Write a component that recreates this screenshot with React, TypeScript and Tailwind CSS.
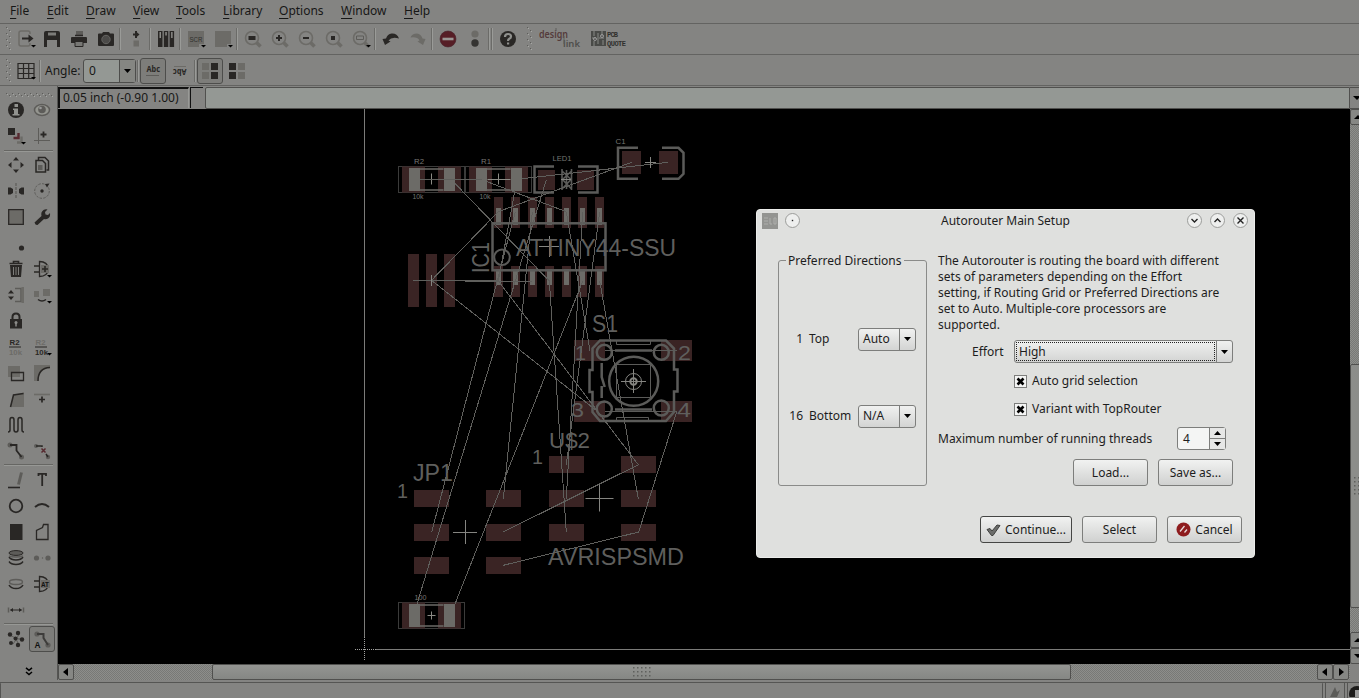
import React from "react";

const D = "#292725";
const M = "#5d5c59";
const L = "#6c6b67";

function Ico({ children, className = "" }: { children?: React.ReactNode; className?: string }) {
  return (
    <svg width="24" height="24" viewBox="0 0 24 24" fill="none" stroke={D} strokeWidth="1.5" className={`shrink-0 ${className}`}>
      {children}
    </svg>
  );
}

const Caret = () => <path d="M17 18h5l-2.500 2.500z" fill="#000" stroke="none" />;

function Cell({ children }: { children?: React.ReactNode }) {
  return <div className="flex h-full w-[27px] shrink-0 items-center justify-center">{children}</div>;
}

function Sep() {
  return <div className="mr-px h-[22px] w-[2px] shrink-0 border-r border-[#9a9b98] bg-[#6b6b68]" />;
}

function Grip() {
  return (
    <svg width="6" height="24" viewBox="0 0 6 24" className="shrink-0">
      {[0, 1, 2, 3, 4, 5, 6, 7].map((i) => (
        <g key={i}>
          <rect x={i % 2 ? 3 : 0} y={i * 3} width="1" height="1" fill="#5d5d5a" />
          <rect x={(i % 2 ? 3 : 0) + 1} y={i * 3 + 1} width="1" height="1" fill="#a6a7a4" />
        </g>
      ))}
    </svg>
  );
}

function Mag({ children }: { children?: React.ReactNode }) {
  return (
    <Ico>
      <path d="M15.500 15.500l4 4" stroke={L} strokeWidth="3.500" />
      <circle cx="11" cy="11" r="6.500" stroke={L} strokeWidth="1.600" />
      {children}
    </Ico>
  );
}

const menus = [
  ["File", "w-[37px]"],
  ["Edit", "w-[39px]"],
  ["Draw", "w-[47px]"],
  ["View", "w-[43px]"],
  ["Tools", "w-[47px]"],
  ["Library", "w-[56px]"],
  ["Options", "w-[62px]"],
  ["Window", "w-[63px]"],
  ["Help", "w-[40px]"],
];

function MenuBar() {
  return (
    <div className="flex h-6 shrink-0 items-center border-b border-[#636361] pb-px pl-[10px]">
      {menus.map(([m, w]) => (
        <div key={m} className={`${w} whitespace-nowrap`}>
          <span className="underline decoration-1 underline-offset-[3px]">{m[0]}</span>
          {m.slice(1)}
        </div>
      ))}
    </div>
  );
}

function MainToolbar() {
  return (
    <div className="flex h-[31px] shrink-0 items-center border-b border-[#636361]">
      <div className="flex w-[12px] shrink-0 pl-[6px]"><Grip /></div>
      <Cell>
        <Ico><path d="M16 7V6q0-2-2-2H7Q5 4 5 6v11q0 2 2 2h7q2 0 2-2v-1" stroke={L} /><path d="M8 11.500h8" strokeWidth="2" /><path d="M14.500 7.500l5 4-5 4z" fill={D} stroke="none" /><Caret /></Ico>
      </Cell>
      <div className="-ml-px flex h-full"><Cell>
        <Ico><path d="M4 6q0-2 2-2h12q2 0 2 2v14H4z" fill={D} stroke="none" /><path d="M8 5.500h8v3H8z" fill="#7c7c79" stroke="none" /><path d="M7 13h10v7H7z" fill="#848482" stroke="none" /></Ico>
      </Cell></div>
      <Cell>
        <Ico><path d="M9 4h7v4H9z" fill={M} stroke="none" /><path d="M8 8.500h8" stroke={D} /><path d="M4 11q0-1 1-1h14q1 0 1 1v5H4z" fill={D} stroke="none" /><path d="M8 14.500h8v5H8z" fill="#777774" stroke={D} strokeWidth="1" /></Ico>
      </Cell>
      <Cell>
        <Ico><path d="M4 7.500q0-1 1-1h3l1-1.500h6l1 1.500h3q1 0 1 1V18q0 1-1 1H5q-1 0-1-1z" fill={D} stroke="none" /><circle cx="12" cy="12.500" r="4.200" fill="#4b4a48" stroke="#656461" strokeWidth="1" /></Ico>
      </Cell>
      <Sep />
      <Cell>
        <Ico><path d="M9 7.500h4M12 4v7" strokeWidth="2" /><path d="M12 4.500l3.500 3-3.500 3z" fill={D} stroke="none" /><path d="M9.500 13.500h5.500v6H9.500z" fill={L} stroke="none" /></Ico>
      </Cell>
      <Sep />
      <Cell>
        <Ico><path d="M4 4h4.500v16H4zM9.800 4h4.500v16H9.800zM15.600 4h4.500v16h-4.500z" fill={D} stroke="none" /><path d="M5.500 5h1.500v6H5.500zM11.300 5h1.500v3.500h-1.500zM17.100 5h1.500v6h-1.500z" fill="#8b8b88" stroke="none" /></Ico>
      </Cell>
      <Sep />
      <Cell>
        <Ico><path d="M4 4h16v16H4z" fill={L} stroke="none" /><text x="5.500" y="14.500" fontSize="7.500" fontFamily="Liberation Sans, sans-serif" fill="#30302e" stroke="none" textLength="13" lengthAdjust="spacingAndGlyphs">SCR</text><path d="M15 17h7v4h-7z" fill="#848482" stroke="none" /><Caret /></Ico>
      </Cell>
      <Cell>
        <Ico><path d="M4 4h16v16H4z" fill={L} stroke="none" /><path d="M16 17h6v4h-6z" fill="#848482" stroke="none" /><Caret /></Ico>
      </Cell>
      <Sep />
      <Cell><Mag><path d="M7.500 9h7v4h-7z" fill={D} stroke="none" /></Mag></Cell>
      <Cell><Mag><path d="M8 11h6M11 8v6" strokeWidth="2" /></Mag></Cell>
      <Cell><Mag><path d="M8 11h6" strokeWidth="2" /></Mag></Cell>
      <Cell><Mag><path d="M9 9h4v4H9z" fill={D} stroke="none" /></Mag></Cell>
      <Cell><Mag><path d="M7.500 9h7v3.500h-7z" stroke={M} strokeWidth="1" /><Caret /></Mag></Cell>
      <Sep />
      <Cell>
        <Ico><path d="M3.500 12l2.500 6 5.500-3.500-2-1q3-4 10.500-2Q18 6 12.500 6.500 8.500 7 7 11.500z" fill={D} stroke="none" /></Ico>
      </Cell>
      <Cell>
        <Ico><path d="M19.500 12L17 18l-5.500-3.500 2-1q-2-4-9-3Q6 6.500 11 6.500q4 .5 5.500 5z" fill={L} stroke="none" /></Ico>
      </Cell>
      <Sep />
      <Cell>
        <Ico><circle cx="12" cy="12" r="8" fill="#561e26" stroke="#46222a" strokeWidth=".6" /><path d="M6.500 12h11" stroke="#9a9694" strokeWidth="2.600" /></Ico>
      </Cell>
      <Cell>
        <Ico><circle cx="12" cy="7" r="3.600" fill={L} stroke="none" /><circle cx="12" cy="16" r="3.700" fill="#353432" stroke="none" /></Ico>
      </Cell>
      <Sep />
      <Sep />
      <Cell>
        <Ico><circle cx="12" cy="12" r="8" fill={D} stroke="none" /><path d="M9 10q0-3 3-3t3 2.500q0 1.500-1.700 2.300Q12 12.500 12 14" stroke="#90918e" strokeWidth="2.200" /><path d="M11 15.500h2.200v2H11z" fill="#90918e" stroke="none" /></Ico>
      </Cell>
      <div className="flex w-[18px] shrink-0 pl-[6px]"><Grip /></div>
      <svg width="42" height="22" viewBox="0 0 42 22" className="shrink-0" fontFamily="Noto Sans, sans-serif" fontWeight="600">
        <text x="0" y="10" fontSize="10" fill="#543b3b" textLength="29" lengthAdjust="spacingAndGlyphs">design</text>
        <text x="24" y="19" fontSize="9" fill="#4f4e4c" textLength="17" lengthAdjust="spacingAndGlyphs">link</text>
        <path d="M17 3v-3M25 8v8" stroke="#5d5c5a" />
      </svg>
      <svg width="48" height="22" viewBox="0 0 48 22" className="ml-[10px] shrink-0" fontFamily="Liberation Mono, monospace" fontWeight="700">
        <path d="M0 3h15v15H0z" fill="#494a47" />
        <path d="M3 3v5M3 13v5M7 5v11M11 3v5M12 12v5M1 10h4M8 10h5" stroke="#898a87" />
        <circle cx="4" cy="11" r="1.500" fill="none" stroke="#999" /><circle cx="11" cy="8" r="1.500" fill="none" stroke="#999" />
        <text x="16" y="8.500" fontSize="7" fill="#30302e" textLength="11">PCB</text>
        <text x="16" y="17.500" fontSize="7" fill="#30302e" textLength="19">QUOTE</text>
      </svg>
    </div>
  );
}

function Quad({ flip = false }: { flip?: boolean }) {
  const a = flip ? D : L;
  const b = flip ? L : D;
  return (
    <Ico>
      <g stroke="none"><path d="M4 4h7v7H4z" fill={a} /><path d="M13 4h7v7h-7z" fill={b} /><path d="M4 13h7v7H4z" fill={a} /><path d="M13 13h7v7h-7z" fill={b} /></g>
    </Ico>
  );
}

function ParamToolbar() {
  return (
    <div className="flex h-[31px] shrink-0 items-center border-b border-[#636361] pt-px">
      <div className="flex w-[12px] shrink-0 pl-[6px]"><Grip /></div>
      <Cell>
        <Ico><path d="M4 4.500h16v15H4zM4 9.500h16M4 14.500h16M9.500 4.500v15M14.700 4.500v15" strokeWidth="1.200" /><Caret /></Ico>
      </Cell>
      <Sep />
      <div className="w-[41px] shrink-0 whitespace-nowrap pl-[3px]">Angle:</div>
      <div className="flex h-6 w-[53px] shrink-0 rounded-[3px] border border-[#4d4d4b] bg-[#949894]">
        <div className="flex w-[35px] items-center pl-[5px]">0</div>
        <div className="flex flex-1 items-center justify-center border-l border-[#4d4d4b] bg-[#858682]">
          <svg width="7" height="4"><path d="M0 0h7L3.500 4z" /></svg>
        </div>
      </div>
      <div className="w-px shrink-0" />
      <Sep />
      <div className="flex h-[26px] w-[26px] shrink-0 items-center justify-center rounded-[3px] border border-[#4d4d4b] bg-[#7d7d7a]">
        <svg width="16" height="16"><text x="1.500" y="9" fontSize="8" fontWeight="700" fill={D} fontFamily="Noto Sans, sans-serif" textLength="13.500" lengthAdjust="spacingAndGlyphs">Abc</text><path d="M1 12.500h13" stroke={M} /></svg>
      </div>
      <Cell>
        <svg width="16" height="16"><path d="M2 3.500h12" stroke={L} /><text x="-14.500" y="-6" transform="rotate(180)" fontSize="8" fontWeight="700" fill={D} fontFamily="Noto Sans, sans-serif" textLength="13.500" lengthAdjust="spacingAndGlyphs">Abc</text></svg>
      </Cell>
      <div className="w-px shrink-0" />
      <Sep />
      <div className="flex h-[26px] w-[26px] shrink-0 items-center justify-center rounded-[3px] border border-[#4d4d4b] bg-[#7d7d7a]"><Quad /></div>
      <Cell><Quad flip /></Cell>
    </div>
  );
}

const T = ({ x, y, s, c, len, children }: { x: number; y: number; s: number; c: string; len?: number; children: string }) => (
  <text x={x} y={y} fontSize={s} fill={c} stroke="none" textLength={len} lengthAdjust="spacingAndGlyphs" fontFamily="Liberation Sans, sans-serif" fontWeight="700">{children}</text>
);

const group1 = [
  <Ico><circle cx="12" cy="12" r="8" fill={D} stroke="none" /><path d="M10.500 6h3.500v3h-3.500zM9 10.500h5V16h1.500v1.500h-7V16H10v-4H9z" fill="#92938f" stroke="none" /></Ico>,
  <Ico><ellipse cx="12" cy="12" rx="7.500" ry="5.500" fill="#94958f" stroke={M} /><circle cx="12" cy="11.500" r="3.800" fill={M} stroke="none" /><circle cx="10.500" cy="10" r="1.300" fill="#999" stroke="none" /></Ico>,
  <Ico><path d="M4 4h7v7H4z" fill={D} stroke="none" /><path d="M9.500 14h5V9" stroke="#572a30" strokeWidth="2.400" /><path d="M13 18.500h4.500v-6" stroke={L} strokeWidth="2.400" /><Caret /></Ico>,
  <Ico><path d="M8.500 4v16M4 16.500h16" stroke={M} strokeWidth="1" /><path d="M13.500 7.500v6M10.500 10.500h6" strokeWidth="1.800" /></Ico>,
];

const group2 = [
  <Ico><path d="M12 4l3 3.500H9zM12 20l3-3.500H9zM4 12l3.500-3v6zM20 12l-3.500-3v6z" fill={D} stroke="none" /></Ico>,
  <Ico><path d="M8.500 7V4.500h6.500l3.500 3.500v9h-2" stroke={D} /><path d="M6 7.500h6.500l3 3V19H6z" stroke={D} fill="#848482" /><path d="M8 12h4.500v5H8z" fill={M} stroke="none" /></Ico>,
  <Ico><path d="M12 4v16" stroke={M} strokeDasharray="3 1" strokeWidth="1.200" /><path d="M4 8.500h2.500L9 10v4l-2.500 1.500H4zM20 8.500h-2.500L15 10v4l2.500 1.500H20z" fill={D} stroke="none" /></Ico>,
  <Ico><circle cx="12" cy="12" r="7.300" stroke={M} strokeWidth="1" strokeDasharray="2.500 1.300" /><circle cx="12" cy="12" r="1.700" fill={D} stroke="none" /><path d="M15 5l4.500-.500-2.500 4z" fill={D} stroke="none" /></Ico>,
  <Ico><path d="M4.700 4.700h14.600v14.600H4.700z" fill={L} stroke={D} strokeWidth="1.300" /></Ico>,
  <Ico><path d="M4.500 17.500l7-6.500q-1-4 2-6 2-1 4-.5L15 7l.5 2.500 2.500.5 2-2q.5 4-2 5.500-2 1.200-4 .5l-6.500 6q-2 .5-3-2.500z" fill={D} stroke="none" /></Ico>,
  <Ico><circle cx="17.500" cy="17" r="2.600" fill={D} stroke="none" /></Ico>,
  null,
  <Ico><path d="M9.500 6V4.500h5V6M5.500 6.500h13" strokeWidth="1.600" /><path d="M6 8h12l-1 12H7z" fill={D} stroke="none" /><path d="M9.500 10v8M12 10v8M14.500 10v8" stroke="#7c7c79" strokeWidth="1" /></Ico>,
  <Ico><path d="M9.500 4.500q8 0 9 7.500-1 7.500-9 7.500zM4 9h5M4 15h5" stroke={D} strokeWidth="1.300" /><path d="M11 8h8v8h-8z" fill={L} stroke="none" /><path d="M12 12h6M15 9v6" strokeWidth="1.600" /><Caret /></Ico>,
  <Ico><path d="M4 10.500l3-3.500 3 3.500zM4 13.500L7 17l3-3.500z" fill={D} stroke="none" /><path d="M11 5.500h6v13h-6" stroke={M} /><path d="M17.500 4h2.500v16h-2.500z" fill={L} stroke="none" /></Ico>,
  <Ico><path d="M4 8h5v6H4zM13 6h7v7h-7z" fill={L} stroke="none" /><path d="M8 16.500q4 3 8 0" /><Caret /></Ico>,
  <Ico><path d="M8.500 11V8q0-3.500 3.500-3.500T15.500 8v3" strokeWidth="2" /><path d="M6 10h12v9.500H6z" fill={D} stroke="none" /><circle cx="12" cy="13.500" r="1.500" fill="#8b8b88" stroke="none" /><path d="M12 14v3.500" stroke="#8b8b88" /></Ico>,
  null,
  <Ico><T x={5.500} y={10} s={8} c={D} len={10}>R2</T><path d="M5 12h12" stroke={D} strokeWidth="1" /><T x={5} y={20} s={8} c={L} len={13}>10k</T></Ico>,
  <Ico><T x={5.500} y={10} s={8} c={L} len={10}>R2</T><path d="M5 12h12" stroke={D} strokeWidth="1" /><T x={5} y={20} s={8} c={D} len={13}>10k</T><Caret /></Ico>,
  <Ico><path d="M4 5h12v11H4z" fill={L} stroke="none" /><path d="M7.500 11.500h12v8h-12z" strokeWidth="1.300" /></Ico>,
  <Ico><path d="M4 20V4h16v2Q9 7 8.500 20z" fill={L} stroke="none" /><path d="M8 20Q8 7 20 6.500" /></Ico>,
  <Ico><path d="M6 20L9.500 8 20 5.500V20z" fill={L} stroke="none" /><path d="M6.500 20L9.500 8 19.500 6.500" /></Ico>,
  <Ico><path d="M4 7.500h16" stroke={L} strokeWidth="1.600" /><path d="M12 9.500v6M9 12.500h6" strokeWidth="1.700" /></Ico>,
  <Ico><path d="M4 19q2 0 2-2V7q0-2.500 2-2.500t2 2.500v9.500q0 2.500 2 2.500t2-2.500V7q0-2.500 2-2.500t2 2.500v10q0 2 2 2" strokeWidth="1.500" /></Ico>,
  null,
  <Ico><circle cx="6" cy="6" r="2.500" fill={M} stroke="none" /><circle cx="17.500" cy="18" r="2.500" fill={M} stroke="none" /><path d="M6 6h6.500v5.500l5 6.500" strokeWidth="1.800" /></Ico>,
  <Ico><circle cx="6" cy="7" r="2" fill={M} stroke="none" /><circle cx="18" cy="18" r="2.200" fill={M} stroke="none" /><path d="M6 7h6v1M16 15l2 3" stroke={D} /><path d="M11.500 9.500l4 4M15.500 9.500l-4 4" stroke="#572a30" /></Ico>,
];

const group3 = [
  <Ico><path d="M4 19.500h12" strokeWidth="1.600" /><path d="M14.500 16.500l3-12" stroke={M} strokeWidth="3" /></Ico>,
  <Ico><path d="M8.500 8V5.800h7.500V8M12.200 6v12" strokeWidth="1.800" /></Ico>,
  <Ico><circle cx="12" cy="12" r="6.300" strokeWidth="1.800" /></Ico>,
  <Ico><path d="M5 13q7-6 14 0" strokeWidth="2" /></Ico>,
  <Ico><path d="M6 4h12.500v16H6z" fill={D} stroke="none" /></Ico>,
  <Ico><path d="M6.500 19.500v-9l6-3 1-3h4.500v15z" strokeWidth="1.300" /></Ico>,
  <Ico><ellipse cx="12" cy="7" rx="7" ry="2.400" fill={M} stroke={D} strokeWidth="1" /><path d="M5 11q2 3 7 3t7-3M5 15.500q2 3 7 3t7-3" strokeWidth="1.400" /><path d="M5 10q2 1 7 1t7-1" stroke={M} /></Ico>,
  <Ico><circle cx="6.500" cy="12" r="2.600" fill={M} stroke="none" /><circle cx="18" cy="12" r="2.600" fill={M} stroke="none" /><circle cx="12.500" cy="12" r=".7" fill={M} stroke="none" /></Ico>,
  <Ico><ellipse cx="12" cy="10" rx="6.500" ry="2.500" stroke={M} strokeWidth="1.400" /><path d="M5 13q2 3.500 7 3.500t7-3.500" strokeWidth="1.500" /></Ico>,
  <Ico><path d="M9.500 4.500q8 0 9 7.500-1 7.500-9 7.500zM4 9h5M4 15h5" strokeWidth="1.300" /><path d="M11 8h9v8h-9z" fill={L} stroke="none" /><T x={11} y={15} s={8} c="#111" len={8}>AT</T></Ico>,
  <Ico><path d="M4.500 9.500v5M19.500 9.500v5" stroke={M} /><path d="M6.500 12h11" strokeWidth="1" /><path d="M6 12l3-2v4zM18 12l-3-2v4z" fill={D} stroke="none" /></Ico>,
  null,
];

function IconGrid({ items }: { items: (React.ReactNode | null)[] }) {
  return (
    <div className="grid grid-cols-[26px_26px] pl-[3px]">
      {items.map((it, i) => (
        <div key={i} className="flex h-[26px] items-center justify-center">{it}</div>
      ))}
    </div>
  );
}

function HSep({ className }: { className: string }) {
  return <div className={`ml-1 h-[2px] w-[49px] shrink-0 border-b border-[#979895] bg-[#666663] ${className}`} />;
}

function Sidebar() {
  return (
    <div className="flex w-[58px] shrink-0 flex-col">
      <svg width="58" height="11" className="shrink-0">
        {Array.from({ length: 16 }, (_, i) => (
          <g key={i}>
            <rect x={6 + i * 3} y={i % 2 ? 9 : 7} width="1" height="1" fill="#5d5d5a" />
            <rect x={7 + i * 3} y={i % 2 ? 10 : 8} width="1" height="1" fill="#a6a7a4" />
          </g>
        ))}
      </svg>
      <IconGrid items={group1} />
      <HSep className="mt-px" />
      <IconGrid items={group2} />
      <HSep className="mb-px" />
      <IconGrid items={group3} />
      <HSep className="mb-px" />
      <div className="flex h-[26px] pl-[3px]">
        <div className="flex w-[26px] items-center justify-center">
          <Ico><path d="M6 8l7 4 7-.5M9 17l3.500-5L15 7M12 12l3 6" stroke={M} strokeWidth="1" /><g fill={D} stroke="none"><circle cx="6" cy="7.500" r="2.200" /><circle cx="14" cy="6" r="2.200" /><circle cx="11.500" cy="11.500" r="2" /><circle cx="18" cy="12.500" r="2.200" /><circle cx="7" cy="16" r="2" /><circle cx="14" cy="18" r="2.200" /></g></Ico>
        </div>
        <div className="flex w-[26px] items-center justify-center rounded-[3px] border border-[#4d4d4b] bg-[#7d7d7a]">
          <Ico><circle cx="7" cy="7" r="2.600" fill={M} stroke="none" /><circle cx="18" cy="18" r="2.600" fill={M} stroke="none" /><path d="M7 7h6.500v4l4.500 7" stroke="#3d3c3a" strokeWidth="2" /><T x={4.500} y={20.500} s={9} c="#111" len={6}>A</T></Ico>
        </div>
      </div>
      <div className="flex flex-1 items-center justify-center pt-[11px]">
        <svg width="8" height="9" fill="none" stroke="#000" strokeWidth="1.500"><path d="M1 .8l3 2.500 3-2.500M1 5l3 2.500L7 5" /></svg>
      </div>
    </div>
  );
}

const RED = "#3a2424";
const PAD = "#6c6b67";
const LN = "#5b5b59";
const AIR = "#5f5f5c";

const airwires = [
  [420, 179.5, 482, 179.5], [455, 183.5, 549.3, 281], [431.5, 280.3, 498.3, 211.7], [498.3, 211.7, 631.7, 162.3],
  [522, 178.7, 668.3, 162.3], [487, 181.7, 566.3, 211.7], [546.3, 180, 515.3, 281], [532.3, 211.7, 503.3, 498.7],
  [515, 190, 498.3, 281], [515.3, 211.7, 431.7, 532], [498.3, 281, 638.3, 464.7], [638.3, 464.7, 503.3, 532],
  [515.3, 281, 417, 604], [549.3, 281, 566.3, 532], [431.5, 280.3, 597, 411], [582.7, 281, 455, 604],
  [582.7, 211.7, 566.3, 498.7], [599.7, 211.7, 566.3, 464.7], [566.3, 211.7, 590, 351], [599.7, 281, 638.3, 498.7],
  [677, 411, 638.7, 532], [638.7, 532, 503.3, 565.3], [413, 280.5, 498, 281], [465, 281.3, 532, 281.3],
];

function Resistor({ x, y, label }: { x: number; y: number; label?: boolean }) {
  return (
    <g transform={`translate(${x} ${y})`}>
      <rect x="-33" y="-13" width="66" height="26" fill="none" stroke="#3b3b3a" />
      <path d="M-29.500 -13h23v26h-23zM6.500 -13h23v26h-23z" fill={RED} />
      <path d="M-22.500 -11.500h11v23h-11zM12.500 -11.500h11v23h-11z" fill={PAD} />
      <path d="M-12 -10.500h24M-12 10.500h24" stroke={PAD} strokeWidth="1.500" />
      <path d={label ? "M-11 0h23M0 -6v11" : "M-4 0h8M0 -4v8"} stroke="#8b8a84" />
    </g>
  );
}

function BT({ x, y, len, size = 22, children, transform }: { x: number; y: number; len: number; size?: number; children: string; transform?: string }) {
  return (
    <text x={x} y={y} fontSize={size} textLength={len} lengthAdjust="spacingAndGlyphs" fill={size > 10 ? "#5f5f5d" : "#757572"} transform={transform}>
      {children}
    </text>
  );
}

function Board() {
  const pins = [498.3, 515.3, 532.3, 549.3, 566.3, 582.7, 599.7];
  return (
    <svg width="1292" height="555" viewBox="58 109 1292 555" className="block bg-black" fontFamily="Liberation Sans, sans-serif">
      <path d="M364.500 109v528M376 649.500h974" stroke="#7b7b79" />
      <path d="M364.500 637v23M355 649.500h21" stroke="#a3a3a0" strokeDasharray="1 1" />
      <g fill={RED}>
        {[490, 524].map((y) => [414, 486, 549, 621].map((x) => <rect key={`${x}-${y}`} x={x} y={y} width="35" height="17" />))}
        {[414, 486].map((x) => <rect key={x} x={x} y="557" width="35" height="17" />)}
        {[549, 621].map((x) => <rect key={x} x={x} y="456" width="35" height="17" />)}
        {[408, 426, 444].map((x) => <rect key={x} x={x} y="254" width="11" height="53" />)}
        {pins.map((x) => <path key={x} d={`M${Math.round(x - 4.5)} 197h9v31h-9zM${Math.round(x - 4.5)} 266h9v31h-9z`} />)}
        <path d="M574 340h31v21h-31zM661 340h31v21h-31zM574 401h31v21h-31zM661 401h31v21h-31z" />
        <path d="M538 170h17v20h-17zM577 170h17v20h-17zM622 151h19v23h-19zM659 151h19v23h-19z" />
      </g>
      <Resistor x={431.5} y={179.5} label />
      <Resistor x={498.5} y={179.5} label />
      <Resistor x={431.5} y={615.5} />
      <g fill={PAD}>
        {pins.map((x) => <path key={x} d={`M${Math.round(x - 2.5)} 208h5v17h-5zM${Math.round(x - 2.5)} 269h5v16h-5z`} />)}
      </g>
      <g fill="none" stroke={LN} strokeWidth="2.500">
        <rect x="492.500" y="223.300" width="113" height="47" />
        <circle cx="502" cy="257.300" r="7.800" strokeWidth="2" />
        <path d="M554 166.500h-19.500v26H554M578 166.500h19.500v26H578M638 147.800h-20v31h20M662 147.800h16.500l5 5v21l-5 5H662" />
        <path d="M562 169v21M571.500 169v21M562 171l9 8.500-9 9.500M571.500 171l-9 8.500 9 9.500M566.500 170v19" strokeWidth="1.600" />
        <path d="M600 340.500h66l8 8v21h3.500v22H674v20.500l-8 9h-66l-7.500-9V392H589.500v-22h3v-21.500z" strokeWidth="2.500" />
        <circle cx="604.300" cy="352.300" r="7.500" /><circle cx="661.300" cy="352.300" r="7.500" />
        <circle cx="604.300" cy="409" r="7.500" /><circle cx="661.300" cy="408" r="7.500" />
        <circle cx="633.700" cy="381.300" r="24.500" />
        <path d="M615 350.500h37M615 409.500h37M601.700 363v14l3 10M601.700 386v12" strokeWidth="2.500" />
        <g strokeWidth="1">
          <path d="M616.500 364.500h34v33h-34zM616.500 341v3.500h34V341M616.500 421v-3.500h32v3.500" />
          <path d="M605 350.500h72M605 411.500h72" />
          <g stroke="#858581"><circle cx="633.500" cy="381.500" r="8" /><circle cx="633.500" cy="381.500" r="3.200" strokeWidth="2" /><path d="M621 381.500h25M633.500 369v24" /></g>
        </g>
      </g>
      <g stroke={AIR} strokeWidth="1" shapeRendering="crispEdges">
        {airwires.map(([x1, y1, x2, y2], i) => <line key={i} x1={x1} y1={y1} x2={x2} y2={y2} />)}
      </g>
      <path d="M539 246.500h20M549.500 236v21M431.500 275v11M645 162.500h11M650.500 157v11M585.500 498.500h28M599.500 484.500v27M453 532.500h24M465.500 520v24M561 179.500h10" stroke="#858581" fill="none" />
      <BT x={516} y={256} len={160} size={23}>ATTINY44-SSU</BT>
      <BT x={0} y={0} len={31} size={23} transform="translate(489 273) rotate(-90)">IC1</BT>
      <BT x={592} y={332} len={26} size={23}>S1</BT>
      <BT x={575} y={360} len={11} size={21}>1</BT>
      <BT x={678} y={360} len={13} size={21}>2</BT>
      <BT x={571} y={417} len={13} size={21}>3</BT>
      <BT x={677} y={417} len={14} size={21}>4</BT>
      <BT x={549} y={448} len={41}>U$2</BT>
      <BT x={532} y={464} len={11} size={21}>1</BT>
      <BT x={413} y={481} len={40} size={23}>JP1</BT>
      <BT x={397} y={498} len={11} size={21}>1</BT>
      <BT x={548} y={565} len={136} size={23}>AVRISPSMD</BT>
      <BT x={414} y={164} len={10} size={7}>R2</BT>
      <BT x={412.5} y={199} len={11} size={7}>10k</BT>
      <BT x={481} y={164} len={10} size={7}>R1</BT>
      <BT x={479.5} y={199} len={11} size={7}>10k</BT>
      <BT x={552.5} y={161} len={19} size={7}>LED1</BT>
      <BT x={615.5} y={144} len={10} size={7}>C1</BT>
      <BT x={414.5} y={600} len={12} size={7}>100</BT>
    </svg>
  );
}

const arrowPaths: Record<string, string> = {
  l: "M6 0v8L1 4z",
  r: "M2 0v8l5-4z",
  u: "M0 6h8L4 2z",
  d: "M0 2h8L4 6z",
};

function SBtn({ dir, className }: { dir: string; className: string }) {
  return (
    <div className={`flex shrink-0 items-center justify-center overflow-hidden rounded-[2px] border border-[#50504e] bg-[#868784] ${className}`}>
      <svg width="8" height="8" className="shrink-0"><path d={arrowPaths[dir]} /></svg>
    </div>
  );
}

function Dots({ cols, rows }: { cols: number; rows: number }) {
  return (
    <svg width={cols * 4} height={rows * 4} className="shrink-0">
      {Array.from({ length: cols * rows }, (_, i) => (
        <rect key={i} x={(i % cols) * 4 + 1} y={Math.floor(i / cols) * 4 + 1} width="1.500" height="1.500" fill="#5f605d" />
      ))}
    </svg>
  );
}

function HScroll() {
  return (
    <div className="flex h-4 shrink-0 bg-[repeating-conic-gradient(#8d8e8b_0_25%,#787976_0_50%)] bg-[length:2px_2px]">
      <SBtn dir="l" className="w-4" />
      <div className="w-[138px] shrink-0" />
      <div className="flex w-[859px] shrink-0 items-center justify-center rounded-[2px] border border-[#50504e] bg-linear-to-b from-[#949592] to-[#858784]"><Dots cols={5} rows={3} /></div>
      <div className="flex-1" />
      <SBtn dir="l" className="w-4" />
      <SBtn dir="r" className="mr-px w-4" />
    </div>
  );
}

function VScroll() {
  return (
    <div className="flex w-[9px] shrink-0 flex-col overflow-hidden bg-[repeating-conic-gradient(#8d8e8b_0_25%,#787976_0_50%)] bg-[length:2px_2px]">
      <SBtn dir="u" className="h-4 w-4" />
      <div className="h-[239px] shrink-0" />
      <div className="flex h-[244px] w-4 shrink-0 items-center rounded-[2px] border border-[#50504e] bg-[#8c8d8a] pl-[2px]"><Dots cols={3} rows={5} /></div>
      <div className="flex-1" />
      <SBtn dir="u" className="h-4 w-4" />
      <SBtn dir="d" className="h-4 w-4" />
    </div>
  );
}

function Combo({ children, className, focus = false }: { children: string; className: string; focus?: boolean }) {
  return (
    <div className={`flex h-[23px] rounded-[3px] border border-[#7d7e7c] bg-linear-to-b from-[#f0f1f0] to-[#d3d4d3] ${className}`}>
      <div className="flex flex-1 p-px">
        <div className={`flex flex-1 items-center pl-[2px] ${focus ? "border border-dotted border-[#222]" : "border border-transparent"}`}>{children}</div>
      </div>
      <div className="flex w-4 items-center justify-center border-l border-[#7d7e7c]">
        <svg width="7" height="4"><path d="M0 0h7L3.500 4z" /></svg>
      </div>
    </div>
  );
}

function Btn({ children, className }: { children: React.ReactNode; className: string }) {
  return (
    <div className={`flex h-[27px] shrink-0 items-center justify-center whitespace-nowrap rounded-[3px] border bg-linear-to-b from-[#f1f2f1] to-[#d0d1d0] ${className}`}>{children}</div>
  );
}

function WinBtn({ d }: { d: string }) {
  return (
    <svg width="16" height="16" viewBox="0 0 16 16" fill="none">
      <circle cx="7.500" cy="7.500" r="7" fill="#eeefee" stroke="#9b9c9a" />
      <path d={d} stroke="#222" strokeWidth="1.400" />
    </svg>
  );
}

function Check({ children }: { children: string }) {
  return (
    <div className="flex h-[28px] items-center">
      <svg width="13" height="13" viewBox="0 0 13 13" className="mr-[5px]"><rect x=".5" y=".5" width="12" height="12" fill="#f4f5f4" stroke="#7d7e7c" /><path d="M3.500 3.500l6 6M9.500 3.500l-6 6" stroke="#000" strokeWidth="2.600" /></svg>
      {children}
    </div>
  );
}

function Dialog() {
  return (
    <div className="absolute left-[756px] top-[209px] flex h-[349px] w-[499px] flex-col rounded-[4px] border border-[#ecedeb] bg-[#dfe0de] text-[#1d1d1d]">
      <div className="flex h-[21px] shrink-0 items-center pl-[5px] pr-[5px]">
        <svg width="16" height="16" className="mr-[7px]"><path d="M0 0h16v16H0z" fill="#939491" /><path d="M2 5h4M2 8h4M2 11h4M8 5v6h2M12 5h2v6h-2z" stroke="#aeafac" fill="none" /></svg>
        <WinBtn d="M6.800 7.500h1.400" />
        <div className="flex-1 pl-[23px] text-center">Autorouter Main Setup</div>
        <div className="flex gap-[7px]">
          <WinBtn d="M4.500 6l3 3 3-3" />
          <WinBtn d="M4.500 9l3-3 3 3" />
          <WinBtn d="M4.500 4.500l6 6M10.500 4.500l-6 6" />
        </div>
      </div>
      <div className="mt-[21px] flex pl-[21px]">
        <fieldset className="h-[234px] w-[149px] shrink-0 rounded-[3px] border border-[#8a8b89] pl-[9px]">
          <legend className="-ml-[2px] h-[17px] whitespace-nowrap px-[2px] leading-[17px]">Preferred Directions</legend>
          <div className="mt-[58px] flex h-[24px] items-center">
            <span className="w-[15px] text-right">1</span>
            <span className="w-[55px] pl-[6px]">Top</span>
            <Combo className="w-[58px]">Auto</Combo>
          </div>
          <div className="mt-[53px] flex h-[24px] items-center">
            <span className="w-[15px] text-right">16</span>
            <span className="w-[55px] pl-[6px]">Bottom</span>
            <Combo className="w-[58px]">N/A</Combo>
          </div>
        </fieldset>
        <div className="flex w-[306px] flex-col pl-[11px] pt-[1px]">
          <p className="h-[80px] whitespace-pre leading-[16px] tracking-[0.01px]">{"The Autorouter is routing the board with different\nsets of parameters depending on the Effort\nsetting, if Routing Grid or Preferred Directions are\nset to Auto. Multiple-core processors are\nsupported."}</p>
          <div className="mt-[7px] flex items-center">
            <span className="w-[76px] shrink-0 pl-[34px]">Effort</span>
            <Combo focus className="w-[219px] shrink-0">High</Combo>
          </div>
          <div className="mt-[4px] pl-[76px]">
            <Check>Auto grid selection</Check>
            <Check>Variant with TopRouter</Check>
          </div>
          <div className="mt-[4px] flex items-center">
            <span className="w-[239px] shrink-0 whitespace-nowrap">Maximum number of running threads</span>
            <div className="flex h-[23px] w-[49px] shrink-0 rounded-[3px] border border-[#7d7e7c] bg-[#f4f5f4]">
              <span className="flex-1 pl-[5px] leading-[21px]">4</span>
              <div className="flex w-4 flex-col border-l border-[#7d7e7c] bg-[#e6e7e6]">
                <div className="flex flex-1 items-center justify-center border-b border-[#7d7e7c]"><svg width="7" height="4"><path d="M0 4h7L3.500 0z" /></svg></div>
                <div className="flex flex-1 items-center justify-center"><svg width="7" height="4"><path d="M0 0h7L3.500 4z" /></svg></div>
              </div>
            </div>
          </div>
          <div className="mt-[9px] flex justify-end gap-[10px]">
            <Btn className="w-[75px] border-[#7d7e7c]">Load...</Btn>
            <Btn className="w-[75px] border-[#7d7e7c]">Save as...</Btn>
          </div>
        </div>
      </div>
      <div className="mt-[30px] flex justify-end gap-[10px] pr-[12px]">
        <Btn className="w-[92px] border-[#454644]">
          <svg width="15" height="14" viewBox="0 0 15 14" className="mr-[4px]"><path d="M1 6.500l3-1 2 2.500 5-6 3 .5-7 10H5.500z" fill="#6c6d6b" stroke="#3f403e" strokeWidth="1" /></svg>
          Continue...
        </Btn>
        <Btn className="w-[75px] border-[#7d7e7c]">Select</Btn>
        <Btn className="w-[75px] border-[#7d7e7c]">
          <svg width="15" height="15" viewBox="0 0 15 15" className="mr-[4px]"><circle cx="7.500" cy="7.500" r="7" fill="#8e1c1e" /><path d="M4 9.500l4.500-5.500M8.500 10.500l2.500-3" stroke="#e8dada" strokeWidth="1.300" /></svg>
          Cancel
        </Btn>
      </div>
    </div>
  );
}

export default function App() {
  return (
    <div className="relative flex h-[698px] w-[1359px] flex-col overflow-hidden bg-[#848482] font-['Noto_Sans',sans-serif] text-[12px] leading-4 text-[#171716]">
      <MenuBar />
      <MainToolbar />
      <ParamToolbar />
      <div className="flex h-[594px] shrink-0">
        <Sidebar />
        <div className="-ml-px flex min-w-0 flex-1 flex-col border-l border-[#555553]">
          <div className="flex h-[23px] shrink-0 pt-px">
            <div className="mb-px flex w-[131px] items-center whitespace-nowrap border-l-2 border-t-2 border-r border-[#111] border-r-[#999a97] pb-[2px] pl-[3px]">0.05 inch (-0.90 1.00)</div>
            <div className="mb-px ml-px w-[13px] border-l border-t border-[#111]" />
            <div className="ml-[2px] flex-1 rounded-l-[2px] border border-[#50504e] bg-[#949894]" />
            <div className="flex w-[9px] items-center overflow-hidden border-y border-[#50504e] pl-[3px]"><svg width="8" height="4" className="shrink-0"><path d="M0 0h8L4 4z" /></svg></div>
          </div>
          <div className="flex h-[555px] shrink-0">
            <Board />
            <VScroll />
          </div>
          <div className="flex shrink-0">
            <div className="w-[1292px]"><HScroll /></div>
          </div>
        </div>
      </div>
      <div className="mt-[2px] flex flex-1 border-t border-[#555553]">
        <div className="w-[1323px] shrink-0 rounded-t-[1px] border-x border-[#555553]" />
        <div className="ml-[2px] flex w-[20px] shrink-0 justify-center border-x border-[#555553]">
          <svg width="14" height="14"><path d="M2 14L7 4l2 5 3-2-3 7z" fill="#5b5b58" /></svg>
        </div>
        <div className="ml-[2px] w-[12px] shrink-0 overflow-hidden border-l border-[#555553]">
          <svg width="12" height="14"><circle cx="9" cy="11" r="8" fill="#1c1b1a" /><path d="M7 7h4v7H7z" fill="#999" /></svg>
        </div>
      </div>
      <Dialog />
    </div>
  );
}
